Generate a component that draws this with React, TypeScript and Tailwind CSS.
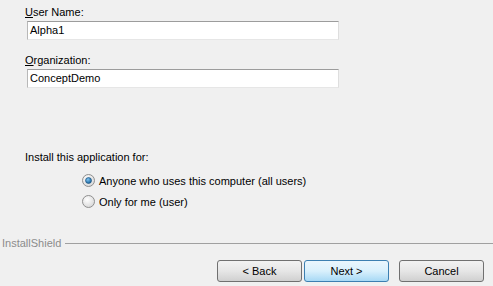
import React from 'react';

const font = { fontFamily: '"Liberation Sans", Tahoma, Arial, sans-serif' };

const Field: React.FC<{ hot: string; rest: string; value: string }> = ({ hot, rest, value }) => (
  <div className="flex flex-col">
    <div className="h-[16px] text-[11px] leading-[16px] text-black">
      <span className="underline">{hot}</span>
      {rest}
    </div>
    <div className="mt-[1px] ml-[2px] h-[19px] w-[312px] border border-t-[#9c9c9c] border-l-[#b8b8b8] border-r-[#dedede] border-b-[#e6e6e6] bg-white px-[2px] text-[11px] leading-[17px] text-black">
      {value}
    </div>
  </div>
);

const Radio: React.FC<{ checked?: boolean; label: string }> = ({ checked, label }) => (
  <div className="flex h-[21px] items-center gap-[4px]">
    <svg width="13" height="13" viewBox="0 0 13 13">
      <defs>
        <radialGradient id={checked ? 'rc' : 'ru'} cx="0.4" cy="0.35" r="0.7">
          <stop offset="0" stopColor="#ffffff" />
          <stop offset="1" stopColor="#d6d6d6" />
        </radialGradient>
        <radialGradient id="dot" cx="0.4" cy="0.35" r="0.7">
          <stop offset="0" stopColor="#7fc4f2" />
          <stop offset="1" stopColor="#0d5a94" />
        </radialGradient>
      </defs>
      <circle cx="6.5" cy="6.5" r="6" fill={`url(#${checked ? 'rc' : 'ru'})`} stroke="#8f8f8f" strokeWidth="1" />
      {checked && <circle cx="6.5" cy="6.5" r="3" fill="url(#dot)" stroke="#1a4d78" strokeWidth="0.6" />}
    </svg>
    <span className="text-[11px] leading-[16px] text-black">{label}</span>
  </div>
);

const Button: React.FC<{ label: string; primary?: boolean }> = ({ label, primary }) => (
  <div
    className={
      'flex h-[22px] w-[85px] items-center justify-center rounded-[3px] border text-[11px] leading-[16px] text-black ' +
      (primary
        ? 'border-[#3c7fb1] bg-gradient-to-b from-[#eaf6fd] via-[#d9f0fc] to-[#a7d9f5]'
        : 'border-[#707070] bg-gradient-to-b from-[#f2f2f2] via-[#e6e6e6] to-[#d0d0d0]')
    }
  >
    {label}
  </div>
);

export default function App() {
  return (
    <div className="flex h-[286px] w-[493px] flex-col overflow-hidden bg-[#f0f0f0]" style={font}>
      <div className="flex flex-col gap-[12px] pl-[25px] pt-[4px]">
        <Field hot="U" rest="ser Name:" value="Alpha1" />
        <Field hot="O" rest="rganization:" value="ConceptDemo" />
      </div>

      <div className="mt-[61px] h-[16px] pl-[25px] text-[11px] leading-[16px] text-black">
        Install this application for:
      </div>
      <div className="mt-[5px] flex flex-col pl-[82px]">
        <Radio checked label="Anyone who uses this computer (all users)" />
        <Radio label="Only for me (user)" />
      </div>

      <div className="mt-[23px] flex h-[16px] items-center pl-[2px]">
        <span className="text-[11px] leading-[16px] text-[#8c8c8c]">InstallShield</span>
        <div className="ml-[4px] h-px flex-1 bg-[#a0a0a0]" />
      </div>

      <div className="mt-[9px] flex justify-end pr-[9px]">
        <Button label="< Back" />
        <div className="ml-[2px]">
          <Button label="Next >" primary />
        </div>
        <div className="ml-[10px]">
          <Button label="Cancel" />
        </div>
      </div>
    </div>
  );
}
